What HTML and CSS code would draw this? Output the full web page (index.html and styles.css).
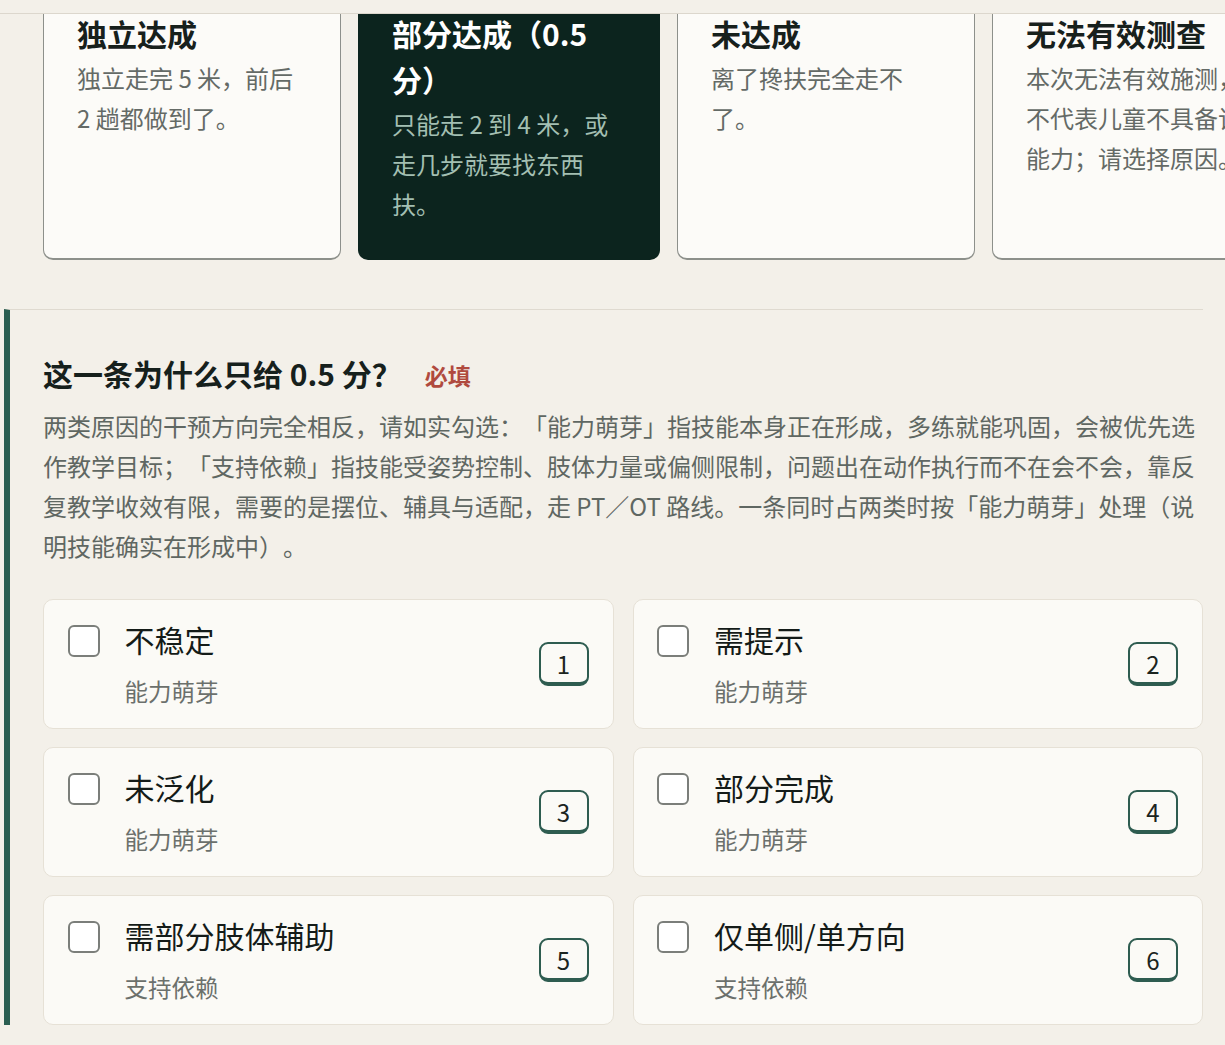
FILE: index.html
```html
<!DOCTYPE html>
<html lang="zh-CN">
<head>
<meta charset="utf-8">
<title>评估</title>
<link rel="stylesheet" href="styles.css">
</head>
<body>
<div class="topbar"></div>
<div class="levels-viewport">
  <div class="levels">
    <div class="level">
      <div class="level-title">独立达成</div>
      <div class="level-desc">独立走完 5 米，前后 2 趟都做到了。</div>
    </div>
    <div class="level level-active">
      <div class="level-title">部分达成（0.5 分）</div>
      <div class="level-desc">只能走 2 到 4 米，或走几步就要找东西扶。</div>
    </div>
    <div class="level">
      <div class="level-title">未达成</div>
      <div class="level-desc">离了搀扶完全走不了。</div>
    </div>
    <div class="level">
      <div class="level-title">无法有效测查</div>
      <div class="level-desc">本次无法有效施测，不代表儿童不具备该能力；请选择原因。</div>
    </div>
  </div>
</div>

<section class="reason">
  <h2 class="reason-title">这一条为什么只给 0.5 分？<span class="required">必填</span></h2>
  <p class="reason-help">两类原因的干预方向完全相反，请如实勾选：「能力萌芽」指技能本身正在形成，多练就能巩固，会被优先选作教学目标；「支持依赖」指技能受姿势控制、肢体力量或偏侧限制，问题出在动作执行而不在会不会，靠反复教学收效有限，需要的是摆位、辅具与适配，走 PT／OT 路线。一条同时占两类时按「能力萌芽」处理（说明技能确实在形成中）。</p>
  <div class="options">
    <label class="option">
      <span class="check"></span>
      <span class="option-text"><span class="option-label">不稳定</span><span class="option-sub">能力萌芽</span></span>
      <span class="key">1</span>
    </label>
    <label class="option">
      <span class="check"></span>
      <span class="option-text"><span class="option-label">需提示</span><span class="option-sub">能力萌芽</span></span>
      <span class="key">2</span>
    </label>
    <label class="option">
      <span class="check"></span>
      <span class="option-text"><span class="option-label">未泛化</span><span class="option-sub">能力萌芽</span></span>
      <span class="key">3</span>
    </label>
    <label class="option">
      <span class="check"></span>
      <span class="option-text"><span class="option-label">部分完成</span><span class="option-sub">能力萌芽</span></span>
      <span class="key">4</span>
    </label>
    <label class="option">
      <span class="check"></span>
      <span class="option-text"><span class="option-label">需部分肢体辅助</span><span class="option-sub">支持依赖</span></span>
      <span class="key">5</span>
    </label>
    <label class="option">
      <span class="check"></span>
      <span class="option-text"><span class="option-label">仅单侧/单方向</span><span class="option-sub">支持依赖</span></span>
      <span class="key">6</span>
    </label>
  </div>
</section>
</body>
</html>
```

FILE: styles.css
```css
* { box-sizing: border-box; }

html, body {
  margin: 0;
  padding: 0;
  background: #f3f0e9;
}

body {
  font-family: "Noto Sans CJK SC", "Noto Sans", sans-serif;
  color: #1b2420;
  text-spacing-trim: space-all;
  overflow: hidden;
  height: 1045px;
}

.topbar {
  height: 14px;
  border-bottom: 1.5px solid #dcd7cd;
}

.levels-viewport {
  overflow: hidden;
  padding-bottom: 2px;
}

.levels {
  display: flex;
  gap: 17px;
  margin-top: -14px;
  padding-left: 43px;
  width: 1400px;
}

.level {
  flex: 0 0 298px;
  background: #fcfbf8;
  border: 1.5px solid #8d908b;
  border-bottom-width: 2.5px;
  border-radius: 10px;
  padding: 9px 32px 34px 33px;
}

.level-active {
  flex-basis: 302px;
  background: #0c241e;
  border-color: #0c241e;
}

.level-title {
  font-size: 30px;
  font-weight: 700;
  line-height: 46px;
  color: #17201c;
}

.level-desc {
  margin-top: 2px;
  font-size: 24px;
  line-height: 40px;
  color: #646a66;
}

.level-active .level-title { color: #ffffff; }
.level-active .level-desc { color: #a3bfb2; }

.reason {
  margin: 47px 0 0 4px;
  width: 1199px;
  border-top: 1.5px solid #dfdad0;
  border-left: 6px solid #2a5e51;
  padding: 40px 0 0 33px;
}

.reason-title {
  margin: 0;
  font-size: 30px;
  font-weight: 700;
  line-height: 46px;
  color: #16201c;
}

.required {
  margin-left: 23px;
  font-size: 23px;
  font-weight: 700;
  color: #b04a3e;
  vertical-align: 1px;
}

.reason-help {
  margin: 8px 0 0;
  font-size: 24px;
  line-height: 40px;
  color: #5f6762;
}

.options {
  margin-top: 33px;
  display: grid;
  grid-template-columns: 1fr 1fr;
  column-gap: 19px;
  row-gap: 18px;
}

.option {
  height: 130px;
  display: flex;
  align-items: flex-start;
  background: #fbfaf6;
  border: 1.5px solid #e6e1d6;
  border-radius: 10px;
  padding: 24.5px 24px 0 23.5px;
}

.check {
  flex: 0 0 32px;
  width: 32px;
  height: 32px;
  background: #ffffff;
  border: 2px solid #7b7e7a;
  border-radius: 6px;
}

.option-text {
  flex: 1;
  display: flex;
  flex-direction: column;
  margin-left: 25px;
  margin-top: -6px;
}

.option-label {
  font-size: 30px;
  font-weight: 400;
  line-height: 40px;
  color: #141b18;
}

.option-sub {
  margin-top: 12px;
  font-size: 23.5px;
  line-height: 40px;
  color: #6b706c;
}

.key {
  align-self: center;
  margin-top: -24px;
  flex: 0 0 50px;
  width: 50px;
  height: 44px;
  border: 2px solid #2e5c50;
  border-bottom-width: 4px;
  border-radius: 9px;
  display: flex;
  align-items: center;
  justify-content: center;
  font-size: 24px;
  color: #1b2420;
  background: #fbfaf6;
}
```
